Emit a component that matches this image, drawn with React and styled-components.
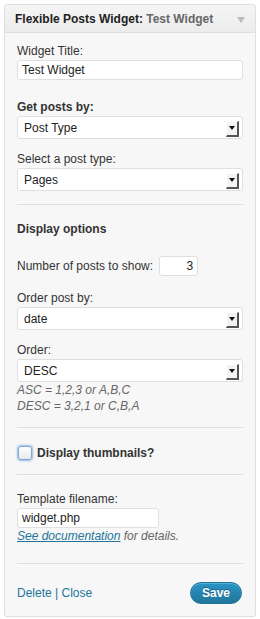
import React from 'react';
import styled, { createGlobalStyle } from 'styled-components';

const GlobalStyle = createGlobalStyle`
  html, body {
    margin: 0;
    padding: 0;
    background: #fff;
  }
  body {
    font-family: "Liberation Sans", Arial, sans-serif;
    font-size: 12px;
    color: #333;
  }
`;

const Widget = styled.div`
  margin: 4px 0 0 4px;
  width: 252px;
  box-sizing: border-box;
  border: 1px solid #dfdfdf;
  border-radius: 3px;
  background: #f7f7f7;
  box-shadow: 0 1px 1px rgba(0, 0, 0, 0.04);
`;

const Header = styled.div`
  height: 27px;
  display: flex;
  align-items: center;
  justify-content: space-between;
  padding: 0 10px 0 10px;
  background: linear-gradient(to bottom, #f5f5f5, #ececec);
  border-bottom: 1px solid #dfdfdf;
  border-radius: 3px 3px 0 0;
`;

const Title = styled.h4`
  margin: 0;
  font-size: 12px;
  font-weight: bold;
  color: #222;
  white-space: nowrap;
  span {
    color: #666;
  }
`;

const Caret = styled.span`
  width: 0;
  height: 0;
  border-left: 4px solid transparent;
  border-right: 4px solid transparent;
  border-top: 6px solid #bbb;
  margin-top: 2px;
`;

const Body = styled.div`
  padding: 10px 12px 0 12px;
  display: flex;
  flex-direction: column;
`;

const Field = styled.div`
  display: flex;
  flex-direction: column;
  margin-top: ${({ $gap }) => $gap || 0}px;
`;

const Label = styled.label`
  line-height: 16px;
  font-weight: ${({ $bold }) => ($bold ? 'bold' : 'normal')};
  color: #333;
  margin-bottom: 1px;
`;

const TextInput = styled.div`
  box-sizing: border-box;
  height: 20px;
  width: ${({ $width }) => $width || '100%'};
  background: #fff;
  border: 1px solid #dfdfdf;
  border-radius: 3px;
  padding: 0 4px;
  line-height: 18px;
  color: #222;
  text-align: ${({ $right }) => ($right ? 'right' : 'left')};
`;

const Select = styled.div`
  box-sizing: border-box;
  height: 23px;
  background: #fff;
  border: 1px solid #dfdfdf;
  border-radius: 3px;
  display: flex;
  align-items: center;
  justify-content: space-between;
  padding: 0 3px 0 6px;
  color: #222;
`;

const Arrow = styled.span`
  box-sizing: border-box;
  width: 13px;
  height: 16px;
  margin-top: 2px;
  background: #f3f3f3;
  border-top: 1px solid #fff;
  border-left: 1px solid #fff;
  border-right: 2px solid #555;
  border-bottom: 2px solid #555;
  display: flex;
  align-items: center;
  justify-content: center;
  &::after {
    content: '';
    width: 0;
    height: 0;
    border-left: 3px solid transparent;
    border-right: 3px solid transparent;
    border-top: 4px solid #111;
  }
`;

const Separator = styled.hr`
  border: 0;
  border-top: 1px solid #dfdfdf;
  margin: ${({ $top }) => $top}px 0 0 0;
  height: 0;
`;

const Heading = styled.div`
  font-weight: bold;
  line-height: 16px;
  margin-top: ${({ $gap }) => $gap}px;
`;

const InlineRow = styled.div`
  display: flex;
  align-items: center;
  gap: 6px;
  margin-top: ${({ $gap }) => $gap}px;
`;

const Note = styled.div`
  font-style: italic;
  font-size: 12px;
  line-height: 16px;
  color: #666;
`;

const CheckRow = styled.label`
  display: flex;
  align-items: center;
  gap: 5px;
  font-weight: bold;
  line-height: 16px;
  margin-top: ${({ $gap }) => $gap}px;
`;

const Checkbox = styled.span`
  box-sizing: border-box;
  width: 14px;
  height: 14px;
  border: 1px solid #7aa6d6;
  border-radius: 3px;
  background: linear-gradient(to bottom, #fdfdfd, #eaeaea);
  box-shadow: 0 0 2px 1px rgba(70, 140, 210, 0.55);
  margin-left: 1px;
`;

const DocLink = styled.a`
  color: #21759b;
  text-decoration: underline;
`;

const Footer = styled.div`
  display: flex;
  align-items: center;
  justify-content: space-between;
  padding: 18px 1px 12px 0;
`;

const Links = styled.div`
  color: #21759b;
  line-height: 16px;
  a {
    color: #21759b;
    text-decoration: none;
  }
`;

const SaveButton = styled.button`
  font-family: "Liberation Sans", Arial, sans-serif;
  font-size: 12px;
  font-weight: bold;
  color: #fff;
  height: 22px;
  width: 52px;
  padding: 0;
  border: 1px solid #21759b;
  border-radius: 11px;
  background: linear-gradient(to bottom, #2a95c5, #21759b);
  box-shadow: inset 0 1px 0 rgba(120, 200, 230, 0.5);
  text-shadow: 0 -1px 0 rgba(0, 0, 0, 0.3);
`;

const DropDown = ({ value }) => (
  <Select>
    <span>{value}</span>
    <Arrow />
  </Select>
);

export default function App() {
  return (
    <>
      <GlobalStyle />
      <Widget>
        <Header>
          <Title>
            Flexible Posts Widget: <span>Test Widget</span>
          </Title>
          <Caret />
        </Header>
        <Body>
          <Field>
            <Label>Widget Title:</Label>
            <TextInput>Test Widget</TextInput>
          </Field>

          <Field $gap={19}>
            <Label $bold>Get posts by:</Label>
            <DropDown value="Post Type" />
          </Field>

          <Field $gap={12}>
            <Label>Select a post type:</Label>
            <DropDown value="Pages" />
          </Field>

          <Separator $top={13} />

          <Heading $gap={16}>Display options</Heading>

          <InlineRow $gap={19}>
            <span>Number of posts to show:</span>
            <TextInput $width="39px" $right>3</TextInput>
          </InlineRow>

          <Field $gap={14}>
            <Label>Order post by:</Label>
            <DropDown value="date" />
          </Field>

          <Field $gap={12}>
            <Label>Order:</Label>
            <DropDown value="DESC" />
            <Note>ASC = 1,2,3 or A,B,C</Note>
            <Note>DESC = 3,2,1 or C,B,A</Note>
          </Field>

          <Separator $top={13} />

          <CheckRow $gap={17}>
            <Checkbox />
            Display thumbnails?
          </CheckRow>

          <Separator $top={13} />

          <Field $gap={16}>
            <Label>Template filename:</Label>
            <TextInput $width="142px">widget.php</TextInput>
            <Note>
              <DocLink href="#">See documentation</DocLink> for details.
            </Note>
          </Field>

          <Separator $top={19} />

          <Footer>
            <Links>
              <a href="#">Delete</a> | <a href="#">Close</a>
            </Links>
            <SaveButton>Save</SaveButton>
          </Footer>
        </Body>
      </Widget>
    </>
  );
}
